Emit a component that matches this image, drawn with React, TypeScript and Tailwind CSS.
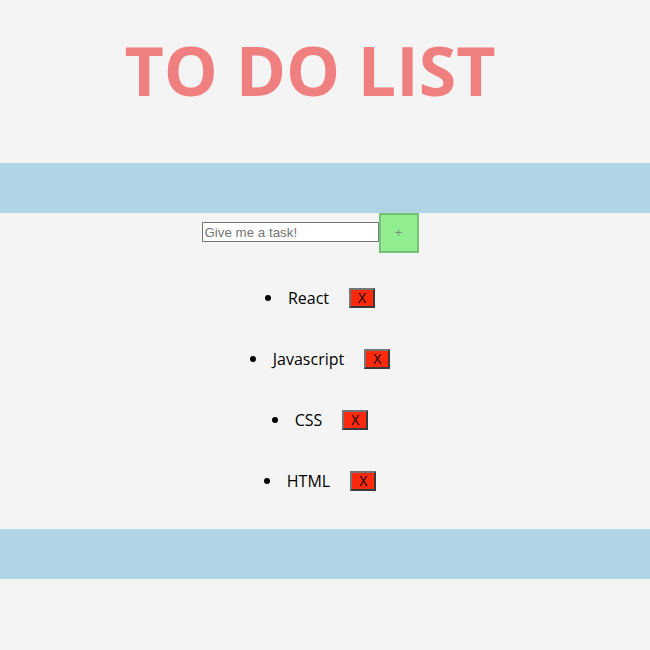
import React, { useState } from 'react';

const initialTasks = ['React', 'Javascript', 'CSS', 'HTML'];

export default function App() {
  const [tasks, setTasks] = useState<string[]>(initialTasks);
  const [value, setValue] = useState('');

  const addTask = () => {
    if (!value.trim()) return;
    setTasks([...tasks, value.trim()]);
    setValue('');
  };

  const removeTask = (i: number) => {
    setTasks(tasks.filter((_, idx) => idx !== i));
  };

  return (
    <div className="min-h-[650px] bg-[#f4f4f4] font-['Open_Sans',sans-serif] text-black">
      {/* Header */}
      <div className="h-[163px] pt-[36px] pr-[30px] text-center">
        <h1 className="text-[68px] font-bold leading-none text-[#f08080]">TO DO LIST</h1>
      </div>

      <div className="h-[50px] bg-[#b0d6e6]" />

      {/* Input row */}
      <div className="flex items-start justify-center pr-[30px]">
        <input
          value={value}
          onChange={(e) => setValue(e.target.value)}
          placeholder="Give me a task!"
          className="mt-[9px] h-[20px] w-[177px] border border-[#767676] bg-white px-[2px] font-['Liberation_Sans',Arial,sans-serif] text-[13.33px] placeholder:text-[#757575] focus:outline-none"
        />
        <button
          onClick={addTask}
          className="flex h-[40px] w-[40px] items-center justify-center border-2 border-[#78c278] bg-[#90ee90] font-['Liberation_Sans',Arial,sans-serif] text-[13px] text-[#6f8f6f]"
        >
          +
        </button>
      </div>

      {/* Task list */}
      <ul className="pt-[14px] pb-[18px]">
        {tasks.map((task, i) => (
          <li key={task + i} className="flex h-[61px] items-center justify-center pr-[10px]">
            <span className="h-[6px] w-[6px] rounded-full bg-black" />
            <span className="ml-[17px] text-[16px]">{task}</span>
            <button
              onClick={() => removeTask(i)}
              className="ml-[20px] flex h-[20px] w-[26px] items-center justify-center border-2 border-t-[#767676] border-l-[#767676] border-r-[#3a3a3a] border-b-[#3a3a3a] bg-[#ff2a0e] text-[14px] leading-none"
            >
              X
            </button>
          </li>
        ))}
      </ul>

      <div className="h-[50px] bg-[#b0d6e6]" />
    </div>
  );
}
